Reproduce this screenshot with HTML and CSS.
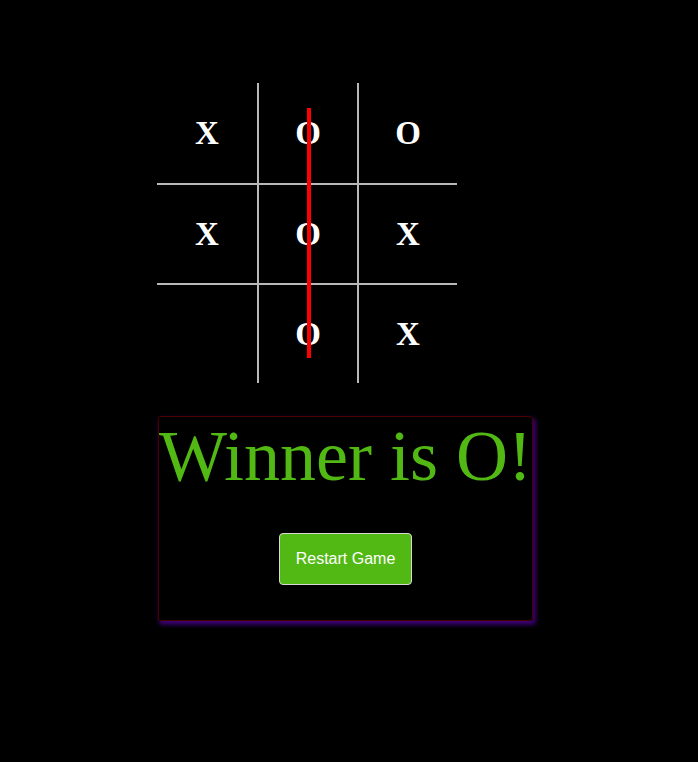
FILE: index.html
```html
<!DOCTYPE html>
<html>
<head>
<meta charset="utf-8">
<link rel="stylesheet" href="styles.css">
</head>
<body>
<div class="game">
  <div class="board">
    <div class="cell">X</div>
    <div class="cell c-l">O</div>
    <div class="cell c-l">O</div>
    <div class="cell c-t">X</div>
    <div class="cell c-l c-t">O</div>
    <div class="cell c-l c-t">X</div>
    <div class="cell c-t"></div>
    <div class="cell c-l c-t">O</div>
    <div class="cell c-l c-t">X</div>
    <div class="win-line"></div>
  </div>
  <div class="result">
    <h1 class="winner">Winner is O!</h1>
    <button class="restart">Restart Game</button>
  </div>
</div>
</body>
</html>
```
FILE: styles.css
```css
html, body {
  margin: 0;
  padding: 0;
  background: #000;
}
.game {
  padding: 83px 0 40px 157px;
}
.board {
  position: relative;
  display: grid;
  grid-template-columns: repeat(3, 100px);
  grid-template-rows: repeat(3, 100px);
  width: 300px;
}
.cell {
  box-sizing: border-box;
  display: flex;
  align-items: center;
  justify-content: center;
  color: #fff;
  font-family: "Liberation Serif", "Times New Roman", serif;
  font-weight: bold;
  font-size: 33px;
  line-height: 1;
}
.c-l { border-left: 2px solid #b8b8b8; }
.c-t { border-top: 2px solid #b8b8b8; }
.win-line {
  position: absolute;
  left: 150px;
  top: 25px;
  width: 4px;
  height: 250px;
  background: #f00;
}
.result {
  display: inline-flex;
  flex-direction: column;
  align-items: center;
  margin-top: 33px;
  margin-left: 1px;
  border: 1px solid #4a0000;
  border-radius: 3px;
  box-shadow: 2px 3px 4px 1px #3a0070;
  padding: 0 0 35px;
}
.winner {
  margin: 3px 0 0;
  color: #52b914;
  font-family: "Liberation Serif", "Times New Roman", serif;
  font-weight: normal;
  font-size: 72px;
  line-height: 1;
}
.restart {
  margin-top: 41px;
  padding: 16px 16px;
  background: #52b914;
  color: #fff;
  border: 1px solid #d8d8d8;
  border-radius: 4px;
  font-family: "Liberation Sans", Arial, sans-serif;
  font-size: 16px;
}
```
